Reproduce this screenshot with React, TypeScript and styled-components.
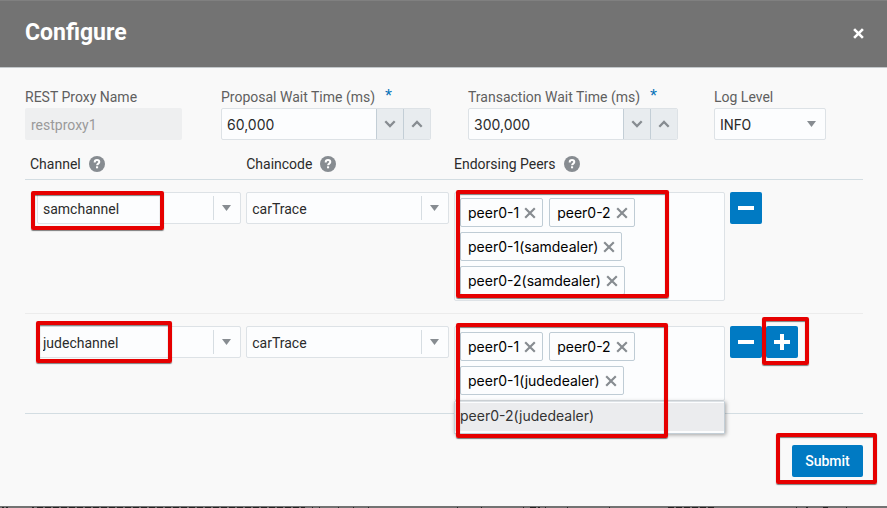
import React, { useState } from "react";
import styled, { createGlobalStyle, css } from "styled-components";

const GlobalStyle = createGlobalStyle`
  *, *::before, *::after { box-sizing: border-box; }
  body {
    margin: 0;
    background: #737373;
    color: #2b2b2b;
    font-family: Roboto, "Liberation Sans", sans-serif;
    font-size: 14px;
    line-height: 20px;
  }
  button, input, select { font: inherit; color: inherit; margin: 0; }
`;

const valueFont = css`
  font-family: Inter, "Liberation Sans", sans-serif;
`;

const Page = styled.div`
  min-height: 100vh;
  display: flex;
  flex-direction: column;
`;

const Dialog = styled.section`
  flex: 1;
  display: flex;
  flex-direction: column;
  background: #f9f9f9;
`;

const Header = styled.header`
  display: flex;
  align-items: center;
  justify-content: space-between;
  height: 68px;
  padding: 0 20px 2px 25px;
  background: #737373;
  border-top: 1px solid #808080;
  border-bottom: 1px solid #c3c8cb;
`;

const Title = styled.h1`
  margin: 0;
  color: #fff;
  font-size: 23px;
  line-height: 32px;
  font-weight: 700;
`;

const IconButton = styled.button`
  display: flex;
  align-items: center;
  justify-content: center;
  padding: 0;
  border: 0;
  background: none;
  cursor: pointer;
`;

const CloseButton = styled(IconButton)`
  width: 18px;
  height: 18px;
  color: #fff;
`;

const Body = styled.form`
  padding: 19px 24px 0 25px;
`;

const Fields = styled.div`
  display: grid;
  grid-template-columns: 196fr 247fr 246fr 149fr;
`;

const Field = styled.div`
  display: flex;
  flex-direction: column;
  align-items: flex-start;
  gap: 1px;
`;

const Label = styled.label`
  color: #5f5f5f;
  line-height: 20px;
  white-space: nowrap;
`;

const Required = styled.span`
  color: #0572b8;
  margin-left: 10px;
  font-family: "Liberation Sans", sans-serif;
  font-size: 18px;
  line-height: 16px;
`;

const controlBox = css`
  height: 32px;
  border: 1px solid #dde2e6;
  border-radius: 2px;
  background: #fcfdfe;
`;

const NameInput = styled.input`
  width: 157px;
  height: 32px;
  padding: 2px 6px 0;
  border: 0;
  border-radius: 2px;
  background: #eeeff0;
  color: #9a9a9a;
`;

const Spinner = styled.div`
  ${controlBox}
  display: flex;
  width: 210px;
  overflow: hidden;
`;

const SpinnerInput = styled.input`
  && {
    ${valueFont}
  }
  flex: 1;
  min-width: 0;
  padding: 2px 5px 0;
  border: 0;
  background: transparent;
`;

const StepButton = styled(IconButton)`
  width: 27px;
  border-left: 1px solid #c3ced6;
  background: #e8ecef;
  color: #878c91;
`;

const SelectWrap = styled.div<{ $wide?: boolean }>`
  ${controlBox}
  display: grid;
  grid-template-columns: 1fr 27px;
  align-items: center;
  width: ${(p) => (p.$wide ? "100%" : "112px")};
`;

const Select = styled.select`
  grid-area: 1 / 1 / 2 / 3;
  width: 100%;
  height: 30px;
  padding: 2px 30px 0 5px;
  border: 0;
  background: transparent;
  appearance: none;
`;

const SelectArrow = styled.span<{ $divided?: boolean }>`
  grid-area: 1 / 2 / 2 / 3;
  display: flex;
  align-items: center;
  justify-content: center;
  height: 24px;
  padding-right: 1px;
  border-left: 1px solid ${(p) => (p.$divided ? "#d6dde2" : "transparent")};
  pointer-events: none;
`;

const Table = styled.table`
  width: 100%;
  margin-top: 14px;
  table-layout: fixed;
  border-spacing: 0;
  border-bottom: 1px solid #d3dde2;
`;

const Column = styled.col<{ $share: number }>`
  width: ${(p) => p.$share}%;
`;

const HeadCell = styled.th`
  height: 26px;
  padding: 0 0 5px 5px;
  border-bottom: 1px solid #d3dde2;
  text-align: left;
  font-weight: 400;
  white-space: nowrap;
`;

const HeadLabel = styled.span`
  display: flex;
  align-items: center;
  gap: 8px;
`;

const Row = styled.tr`
  & + & > td { border-top: 1px solid #ececec; }
`;

const Cell = styled.td<{ $first?: boolean }>`
  padding: 12px 0 12px ${(p) => (p.$first ? "12px" : "5px")};
  vertical-align: top;
`;

const Anchor = styled.div`
  position: relative;
`;

const PeerBox = styled.div`
  display: flex;
  flex-wrap: wrap;
  gap: 5px 6px;
  padding: 5px;
  border: 1px solid #dde2e6;
  border-radius: 2px;
  background: #fcfdfe;
`;

const Chip = styled.span`
  ${valueFont}
  display: flex;
  align-items: center;
  gap: 4px;
  height: 29px;
  padding: 1px 5px 0 7px;
  border: 1px solid #bfccd5;
  border-radius: 2px;
  background: #fcfdfe;
  color: #000;
`;

const ChipRemove = styled(IconButton)`
  width: 14px;
  height: 14px;
  color: #878c91;
`;

const Suggestions = styled.div`
  position: absolute;
  top: 100%;
  left: 0;
  right: 0;
  padding: 1px 0 2px;
  border: 1px solid #c3ced6;
  border-top-color: #dde2e6;
  background: #fcfdfe;
  box-shadow: 1px 1px 4px rgba(0, 0, 0, 0.35);
`;

const Suggestion = styled.div`
  ${valueFont}
  padding: 3px 5px 5px;
  background: #ebecee;
  color: #333;
`;

const Actions = styled.div`
  display: flex;
  gap: 4px;
`;

const SquareButton = styled(IconButton)`
  width: 32px;
  height: 32px;
  border-radius: 2px;
  background: #007ac3;
  color: #fff;
`;

const Footer = styled.footer`
  display: flex;
  justify-content: flex-end;
  padding: 31px 0 29px;
`;

const SubmitButton = styled.button`
  width: 71px;
  height: 32px;
  padding: 0;
  border: 0;
  border-radius: 2px;
  background: #007ac3;
  color: #fff;
  font-weight: 500;
  cursor: pointer;
`;

const Highlight = styled.span<{ $x: number; $y: number; $w: number; $h: number }>`
  position: absolute;
  z-index: 2;
  left: ${(p) => p.$x}px;
  top: ${(p) => p.$y}px;
  width: ${(p) => p.$w}px;
  height: ${(p) => p.$h}px;
  border: 4px solid #e60000;
  border-radius: 2px;
  box-shadow: 0 1px 1px rgba(0, 0, 0, 0.5), inset 0 1px 1px rgba(0, 0, 0, 0.5);
  pointer-events: none;
`;

const Backdrop = styled.svg`
  display: block;
  width: 100%;
  height: 2px;
  background: #737373;
`;

const Cross = ({ size, weight }: { size: number; weight: number }) => (
  <svg width={size} height={size} viewBox="0 0 10 10" aria-hidden="true">
    <path d="M1 1L9 9M9 1L1 9" stroke="currentColor" strokeWidth={weight} fill="none" />
  </svg>
);

const Chevron = ({ up }: { up?: boolean }) => (
  <svg width="12" height="8" viewBox="0 0 12 8" aria-hidden="true">
    <path d={up ? "M1.3 6.7L6 2L10.7 6.7" : "M1.3 1.3L6 6L10.7 1.3"} stroke="currentColor" strokeWidth="2.3" fill="none" />
  </svg>
);

const Triangle = () => (
  <svg width="9" height="6" viewBox="0 0 9 6" aria-hidden="true">
    <path d="M0 0H9L4.5 6Z" fill="#878c91" />
  </svg>
);

const Help = () => (
  <svg width="16" height="16" viewBox="0 0 16 16" role="img" aria-label="Help">
    <circle cx="8" cy="8" r="8" fill="#878c91" />
    <path d="M5.7 6.4C5.7 4.9 6.6 4.1 8 4.1C9.4 4.1 10.3 4.9 10.3 6C10.3 7.6 8.1 7.6 8.1 9.3" stroke="#fff" strokeWidth="2" fill="none" />
    <rect x="7" y="10.3" width="2.1" height="2" fill="#fff" />
  </svg>
);

const Minus = () => (
  <svg width="16" height="16" viewBox="0 0 16 16" aria-hidden="true">
    <path d="M0 8H16" stroke="currentColor" strokeWidth="4" />
  </svg>
);

const Plus = () => (
  <svg width="16" height="16" viewBox="0 0 16 16" aria-hidden="true">
    <path d="M0 8H16M8 0V16" stroke="currentColor" strokeWidth="4" />
  </svg>
);

function NumberField({ id, label, initial }: { id: string; label: string; initial: number }) {
  const [value, setValue] = useState(initial);
  return (
    <Field>
      <Label htmlFor={id}>
        {label}
        <Required>*</Required>
      </Label>
      <Spinner>
        <SpinnerInput
          id={id}
          value={value.toLocaleString("en-US")}
          onChange={(e) => setValue(Number(e.target.value.replace(/\D/g, "")))}
        />
        <StepButton type="button" aria-label="Decrease" onClick={() => setValue(value - 1)}>
          <Chevron />
        </StepButton>
        <StepButton type="button" aria-label="Increase" onClick={() => setValue(value + 1)}>
          <Chevron up />
        </StepButton>
      </Spinner>
    </Field>
  );
}

type Box = [number, number, number, number];

function Marker({ box }: { box: Box }) {
  return <Highlight $x={box[0]} $y={box[1]} $w={box[2]} $h={box[3]} aria-hidden="true" />;
}

interface ChannelRow {
  channel: string;
  chaincode: string;
  peers: string[];
  suggestion?: string;
  channelMark: Box;
  peersMark: Box;
}

const rows: ChannelRow[] = [
  {
    channel: "samchannel",
    chaincode: "carTrace",
    peers: ["peer0-1", "peer0-2", "peer0-1(samdealer)", "peer0-2(samdealer)"],
    channelMark: [-6, -1, 133, 39],
    peersMark: [2, -2, 213, 108],
  },
  {
    channel: "judechannel",
    chaincode: "carTrace",
    peers: ["peer0-1", "peer0-2", "peer0-1(judedealer)"],
    suggestion: "peer0-2(judedealer)",
    channelMark: [-1, -5, 136, 42],
    peersMark: [2, -3, 212, 115],
  },
];

function ComboSelect({ label, value }: { label: string; value: string }) {
  return (
    <SelectWrap $wide>
      <Select aria-label={label} defaultValue={value}>
        <option>{value}</option>
      </Select>
      <SelectArrow $divided>
        <Triangle />
      </SelectArrow>
    </SelectWrap>
  );
}

export default function App() {
  return (
    <Page>
      <GlobalStyle />
      <Dialog role="dialog" aria-labelledby="dialog-title">
        <Header>
          <Title id="dialog-title">Configure</Title>
          <CloseButton type="button" aria-label="Close">
            <Cross size={11} weight={2.4} />
          </CloseButton>
        </Header>
        <Body onSubmit={(e) => e.preventDefault()}>
          <Fields>
            <Field>
              <Label htmlFor="proxy-name">REST Proxy Name</Label>
              <NameInput id="proxy-name" value="restproxy1" disabled readOnly />
            </Field>
            <NumberField id="proposal-wait" label="Proposal Wait Time (ms)" initial={60000} />
            <NumberField id="transaction-wait" label="Transaction Wait Time (ms)" initial={300000} />
            <Field>
              <Label htmlFor="log-level">Log Level</Label>
              <SelectWrap>
                <Select id="log-level" defaultValue="INFO">
                  <option>INFO</option>
                </Select>
                <SelectArrow>
                  <Triangle />
                </SelectArrow>
              </SelectWrap>
            </Field>
          </Fields>

          <Table>
            <colgroup>
              <Column $share={25.8} />
              <Column $share={24.8} />
              <Column $share={32.9} />
              <col />
            </colgroup>
            <thead>
              <tr>
                {["Channel", "Chaincode", "Endorsing Peers"].map((name) => (
                  <HeadCell key={name} scope="col">
                    <HeadLabel>
                      {name}
                      <Help />
                    </HeadLabel>
                  </HeadCell>
                ))}
                <HeadCell />
              </tr>
            </thead>
            <tbody>
              {rows.map((row, index) => (
                <Row key={row.channel}>
                  <Cell $first>
                    <Anchor>
                      <ComboSelect label="Channel" value={row.channel} />
                      <Marker box={row.channelMark} />
                    </Anchor>
                  </Cell>
                  <Cell>
                    <ComboSelect label="Chaincode" value={row.chaincode} />
                  </Cell>
                  <Cell>
                    <Anchor>
                      <PeerBox>
                        {row.peers.map((peer) => (
                          <Chip key={peer}>
                            {peer}
                            <ChipRemove type="button" aria-label={`Remove ${peer}`}>
                              <Cross size={12} weight={1.8} />
                            </ChipRemove>
                          </Chip>
                        ))}
                      </PeerBox>
                      {row.suggestion && (
                        <Suggestions role="listbox" aria-label="Endorsing peer suggestions">
                          <Suggestion role="option" aria-selected="true">
                            {row.suggestion}
                          </Suggestion>
                        </Suggestions>
                      )}
                      <Marker box={row.peersMark} />
                    </Anchor>
                  </Cell>
                  <Cell>
                    <Actions>
                      <SquareButton type="button" aria-label="Remove row">
                        <Minus />
                      </SquareButton>
                      {index === rows.length - 1 && (
                        <Anchor>
                          <SquareButton type="button" aria-label="Add row">
                            <Plus />
                          </SquareButton>
                          <Marker box={[-4, -9, 47, 48]} />
                        </Anchor>
                      )}
                    </Actions>
                  </Cell>
                </Row>
              ))}
            </tbody>
          </Table>

          <Footer>
            <Anchor>
              <SubmitButton type="submit">Submit</SubmitButton>
              <Marker box={[-16, -12, 101, 51]} />
            </Anchor>
          </Footer>
        </Body>
      </Dialog>
      <Backdrop aria-hidden="true">
        <path
          d="M2 1.5H4M6 1.5H8M32 1.5H34M37 1.5H305M312 1.5H313M319 1.5H320M338 1.5H339M353 1.5H354M368 1.5H369M457 1.5H458M481 1.5H482M523 1.5H524M530 1.5H540M545 1.5H546M567 1.5H568M609 1.5H610M668 1.5H714M796 1.5H797M806 1.5H808M823 1.5H828M846 1.5H847"
          stroke="#222"
          strokeWidth="1"
          strokeDasharray="6 2"
          fill="none"
        />
      </Backdrop>
    </Page>
  );
}
